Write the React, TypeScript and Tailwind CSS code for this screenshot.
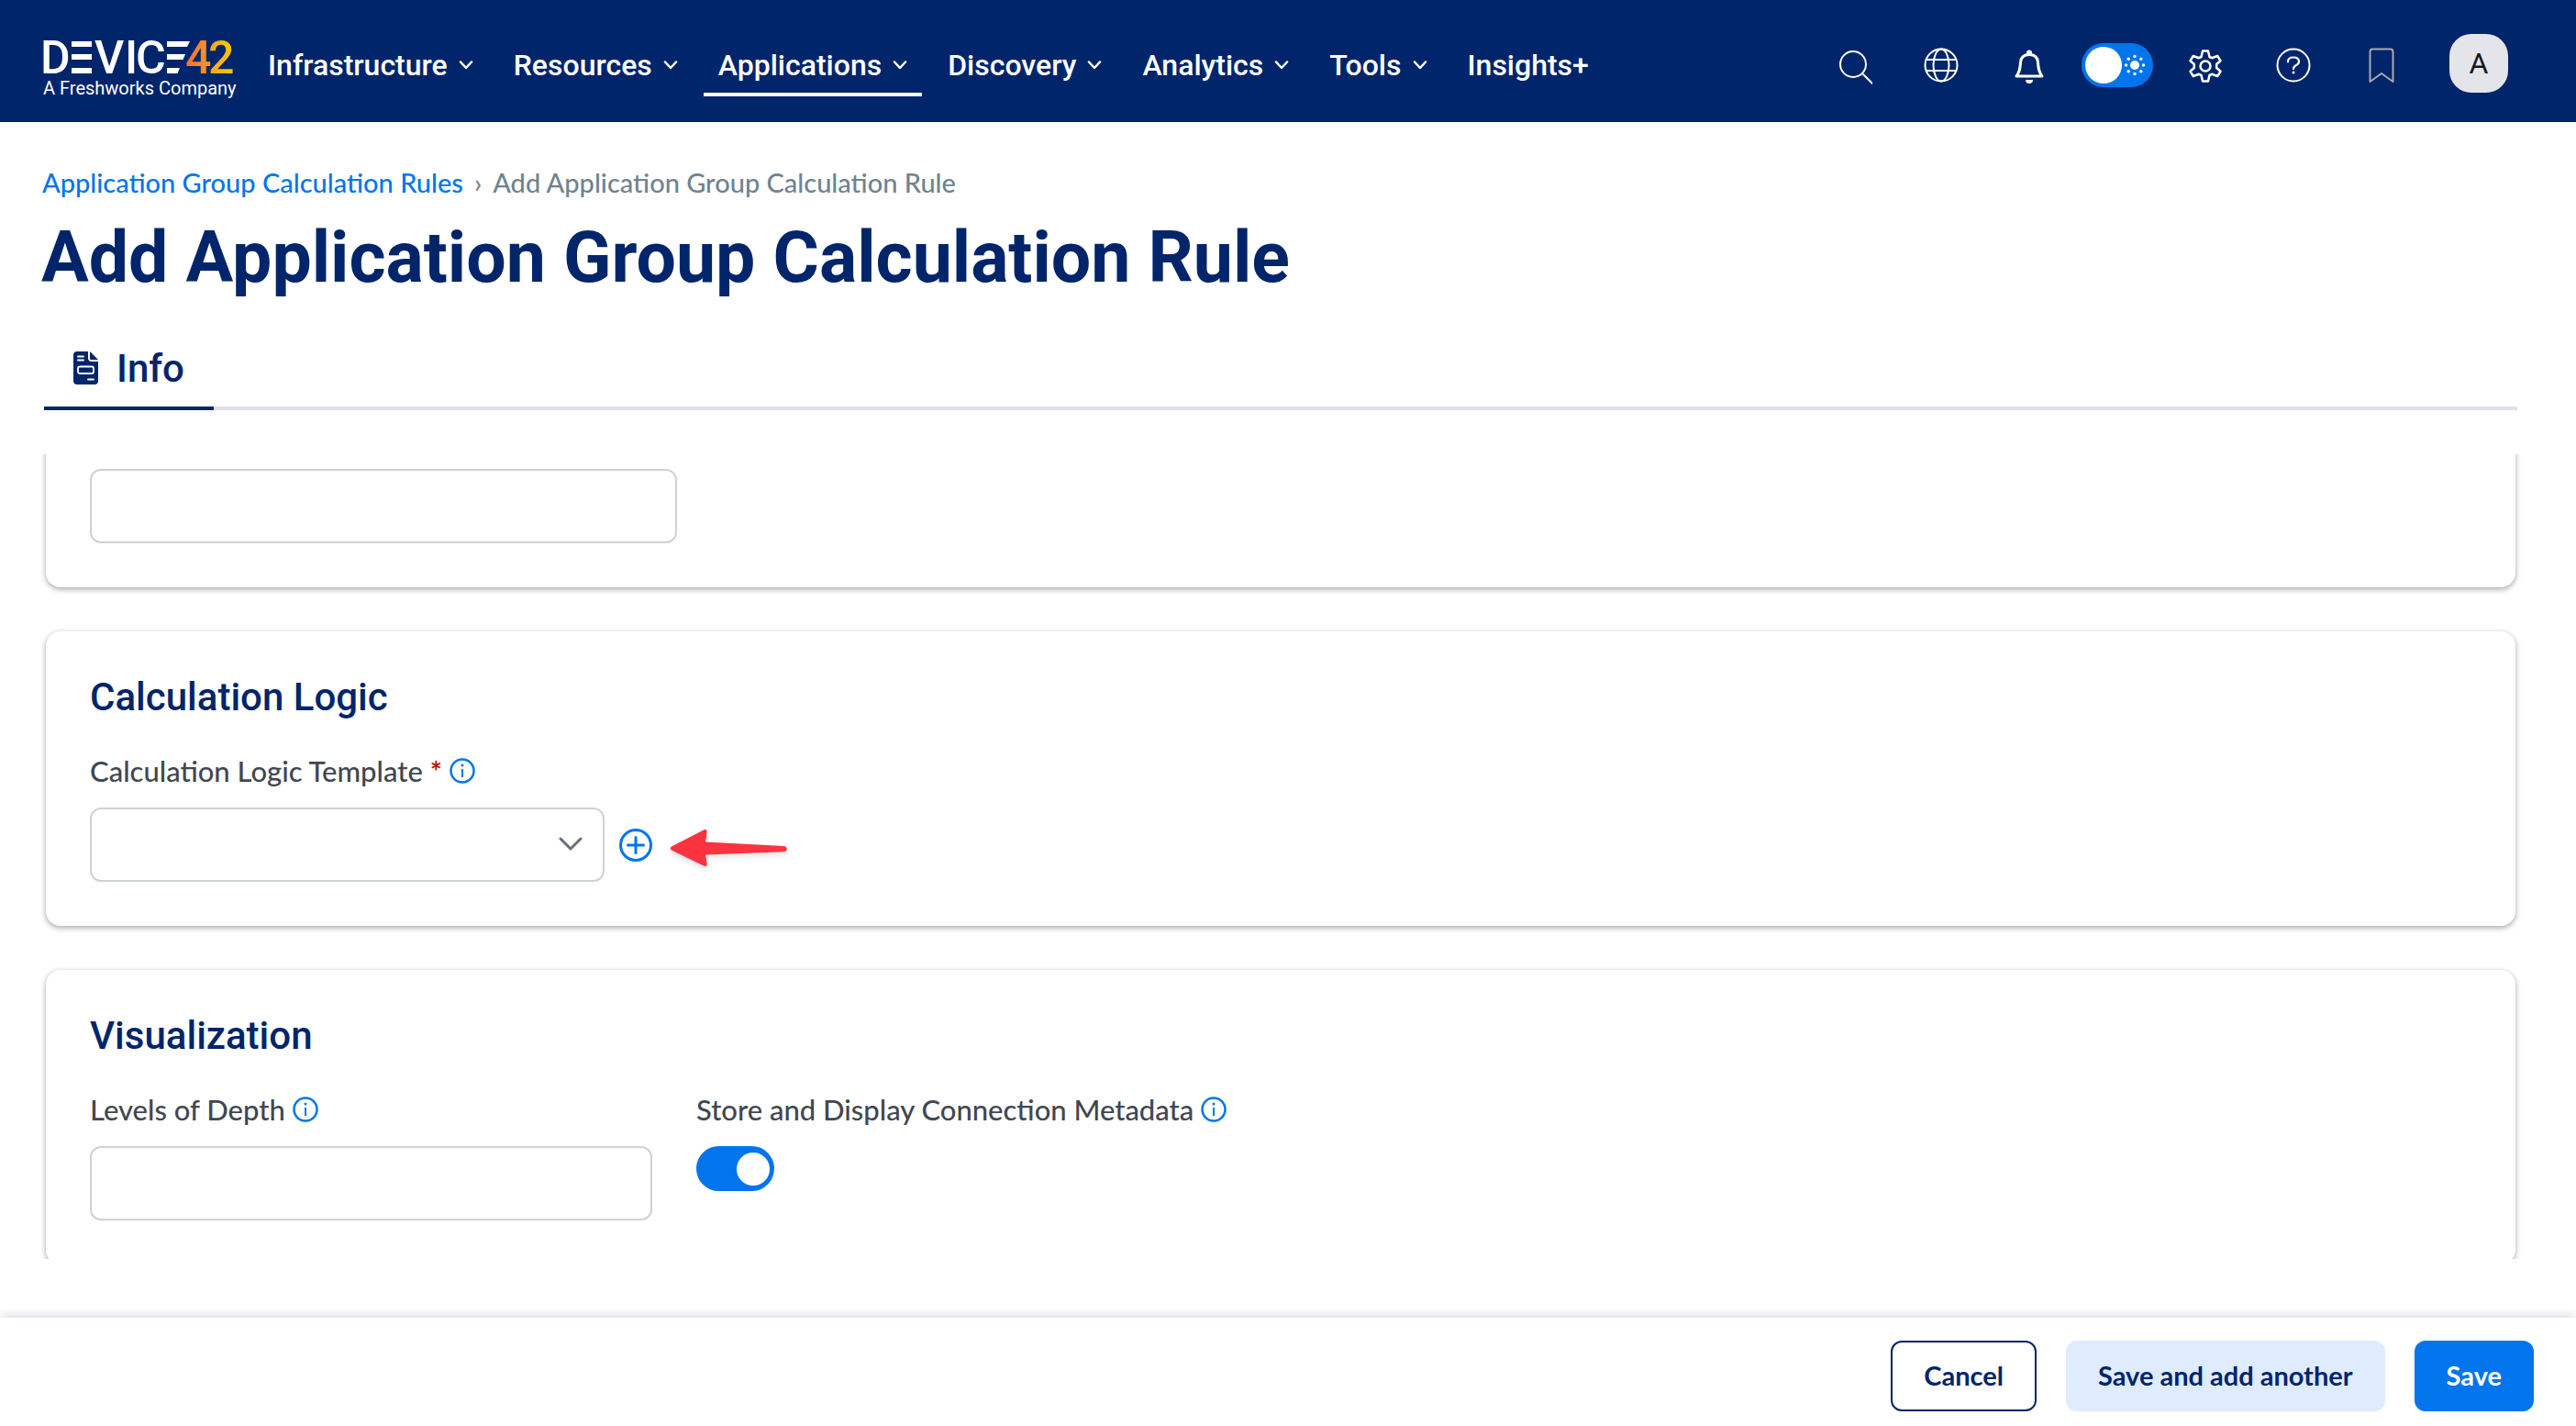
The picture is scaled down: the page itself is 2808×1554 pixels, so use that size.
import type { ReactNode } from "react";

const menus = [
  { label: "Infrastructure", menu: true },
  { label: "Resources", menu: true },
  { label: "Applications", menu: true, active: true },
  { label: "Discovery", menu: true },
  { label: "Analytics", menu: true },
  { label: "Tools", menu: true },
  { label: "Insights+", menu: false },
];

function Logo() {
  return (
    <a href="#" aria-label="Device42 home" className="shrink-0">
      <svg width="216" height="84" viewBox="-4 -8 216 84" fontFamily="Roboto, sans-serif">
        <defs>
          <linearGradient id="four" x1="0" y1="0" x2="1" y2="0">
            <stop offset="0" stopColor="#f36f32" />
            <stop offset="1" stopColor="#f99a22" />
          </linearGradient>
          <linearGradient id="two" x1="0" y1="0" x2="1" y2="0">
            <stop offset="0" stopColor="#f9a51f" />
            <stop offset="1" stopColor="#ffc60a" />
          </linearGradient>
        </defs>
        <g fill="#fff">
          <g fontSize="50" fontWeight="500">
            <text x="-2" y="43">D</text>
            <text x="57" y="43">V</text>
            <text x="90" y="43">I</text>
            <text x="102" y="43">C</text>
          </g>
          <path d="M32 8h22v6H32zM32 22h22v6H32zM32 37h22v6H32z" />
          <path d="M136 8h25l-3 6h-22zM136 22h20l-2.500 6h-17.500zM136 37h14l-2.500 6h-11.500z" />
        </g>
        <g fontSize="50" fontWeight="500">
          <text x="156" y="43" fill="url(#four)">4</text>
          <text x="181" y="43" fill="url(#two)">2</text>
        </g>
        <text x="1" y="66" fill="#fff" fontSize="20">A Freshworks Company</text>
      </svg>
    </a>
  );
}

function NavChevron() {
  return (
    <svg width="16" height="10" viewBox="0 0 16 10" fill="none" stroke="#fff" strokeWidth="2.500" strokeLinecap="round" strokeLinejoin="round">
      <path d="M2 1.500 8 8l6-6.500" />
    </svg>
  );
}

function IconCell({ label, children }: { label: string; children: ReactNode }) {
  return (
    <button type="button" aria-label={label} className="flex w-24 shrink-0 items-center justify-center">
      <svg width="42" height="42" viewBox="-1 -1 42 42" fill="none" stroke="#fff" strokeWidth="2" strokeLinecap="round" strokeLinejoin="round">
        {children}
      </svg>
    </button>
  );
}

function InfoIcon() {
  return (
    <svg width="28" height="28" viewBox="0 0 28 28" fill="none" stroke="#0275ed" strokeWidth="2.500" className="shrink-0">
      <circle cx="14" cy="14" r="12.500" />
      <path d="M14 12v9" strokeWidth="2" />
      <circle cx="14" cy="8" r="1.500" fill="#0275ed" stroke="none" />
    </svg>
  );
}

function Card({ title, children }: { title: string; children: ReactNode }) {
  return (
    <section className="shrink-0 rounded-2xl bg-white p-12 shadow-[0_2px_6px_rgba(0,0,0,0.36)]">
      <h2 className="mb-9 font-[Roboto,sans-serif] text-[42px] leading-[48px] font-medium text-[#00256b]">{title}</h2>
      {children}
    </section>
  );
}

const labelRow = "mb-5 flex h-10 items-center gap-2 text-[31px] leading-10 font-medium text-[#42474f]";
const field = "block h-[81px] w-full rounded-xl border-2 border-[#cdd2da] bg-white px-5 text-[31px] outline-none";

export default function App() {
  return (
    <div className="flex h-screen min-h-[900px] flex-col overflow-hidden bg-white font-[Lato,sans-serif]">
      <header className="flex h-[133px] shrink-0 items-center bg-[#00256b] pr-[74px] pl-[42px]">
        <div className="pt-2">
          <Logo />
        </div>
        <nav className="ml-[18px] flex gap-3 font-[Roboto,sans-serif] text-[32px] leading-[40px] font-medium text-white">
          {menus.map((m) => (
            <button
              key={m.label}
              type="button"
              className={
                m.active
                  ? "flex items-center gap-3 border-b-4 border-white px-4 pt-[22px] pb-[10px]"
                  : "flex items-center gap-3 border-b-4 border-transparent px-4 pt-[22px] pb-[10px]"
              }
            >
              {m.label}
              {m.menu && <NavChevron />}
            </button>
          ))}
        </nav>
        <div className="ml-auto flex items-center pt-1">
          <div className="flex items-center pt-1">
            <IconCell label="Search">
              <circle cx="20" cy="19" r="14" />
              <path d="M30 29l11 11" />
            </IconCell>
            <IconCell label="Language">
              <circle cx="20" cy="20" r="17.500" />
              <ellipse cx="20" cy="20" rx="8.500" ry="17.500" />
              <path d="M4 14h32M4 26h32" />
            </IconCell>
            <IconCell label="Notifications">
              <path d="M6 32c4-5 4-9 4.500-15C11 11 14 8.500 20 8.500s9 2.500 9.500 8.500c.5 6 .5 10 4.500 15z" strokeWidth="3" />
              <path d="M18 8V6.500a2 2 0 0 1 4 0V8" strokeWidth="2" fill="#fff" />
              <path d="M16 36h8a4 4 0 0 1-8 0z" fill="#fff" stroke="none" />
            </IconCell>
            <button type="button" role="switch" aria-checked="false" aria-label="Dark mode" className="flex w-24 items-center justify-center">
              <span className="flex h-12 w-[78px] items-center justify-between rounded-full bg-[#0275ed] pr-2 pl-1">
                <span className="size-10 rounded-full bg-white" />
                <svg width="24" height="24" viewBox="0 0 24 24" fill="#fff">
                  <circle cx="12" cy="12" r="5" />
                  <circle cx="12" cy="2.500" r="1.700" />
                  <circle cx="12" cy="21.500" r="1.700" />
                  <circle cx="2.500" cy="12" r="1.700" />
                  <circle cx="21.500" cy="12" r="1.700" />
                  <circle cx="5.200" cy="5.200" r="1.700" />
                  <circle cx="18.800" cy="5.200" r="1.700" />
                  <circle cx="5.200" cy="18.800" r="1.700" />
                  <circle cx="18.800" cy="18.800" r="1.700" />
                </svg>
              </span>
            </button>
            <IconCell label="Settings">
              <path
                d="M17 4.500h6l1.500 6.500 2.500 1.200 6.200-2.200 3.300 5.200-4.300 3.800v4l4.300 3.800-3.300 5.200-6.200-2.200-2.500 1.200L23 37.500h-6L15.500 31 13 29.800 6.800 32l-3.300-5.200L7.800 23v-4l-4.300-3.800L6.800 10l6.200 2.200 2.500-1.200z"
                strokeWidth="2.500"
              />
              <circle cx="20" cy="21" r="5.500" strokeWidth="2.500" />
            </IconCell>
            <IconCell label="Help">
              <circle cx="20" cy="20" r="17.500" />
              <path d="M14 16.500V16c0-3 2.500-4.500 6-4.500s6 1.500 6 4.700c0 4.300-6 3.300-6 7.800" strokeWidth="2.200" />
              <circle cx="20" cy="28" r="1.500" fill="#fff" stroke="none" />
            </IconCell>
            <IconCell label="Bookmarks">
              <path d="M7.500 38V5.500a3 3 0 0 1 3-3h19a3 3 0 0 1 3 3V38L20 29z" stroke="#a9a9ae" />
            </IconCell>
          </div>
          <button type="button" aria-label="Account" className="ml-[26px] flex size-16 items-center justify-center rounded-3xl bg-[#e4e5ea] font-[Roboto,sans-serif] text-[32px] leading-none text-[#16181c]">
            A
          </button>
        </div>
      </header>

      <main className="flex min-h-0 flex-1 flex-col pt-[46px] pb-16">
        <nav aria-label="Breadcrumb" className="flex h-10 shrink-0 items-center gap-3 pl-[46px] text-[29px] leading-10 font-medium">
          <a href="#" className="text-[#0275ed]">Application Group Calculation Rules</a>
          <span className="text-[#70838f]">›</span>
          <span className="text-[#70838f]">Add Application Group Calculation Rule</span>
        </nav>
        <h1 className="mt-[18px] shrink-0 pl-[45px] font-[Roboto,sans-serif] text-[77px] leading-[88px] font-bold text-[#00256b]">
          Add Application Group Calculation Rule
        </h1>
        <div role="tablist" className="mt-[34px] mr-16 ml-12 flex shrink-0 shadow-[inset_0_-4px_0_#dee0e6]">
          <button
            type="button"
            role="tab"
            aria-selected="true"
            className="flex h-[88px] items-center gap-5 border-b-4 border-[#00256b] px-8 font-[Roboto,sans-serif] text-[42px] font-medium text-[#00256b]"
          >
            <svg width="27" height="36" viewBox="0 0 27 36" fill="#00256b">
              <path d="M4 0h12v7a4 4 0 0 0 4 4h7v21a4 4 0 0 1-4 4H4a4 4 0 0 1-4-4V4a4 4 0 0 1 4-4z" />
              <path d="M18 0l9 9h-8a1 1 0 0 1-1-1z" />
              <path d="M5 5.500h6M5 9.500h6M16 30.500h6" stroke="#fff" strokeWidth="1.800" strokeLinecap="round" />
              <rect x="5" y="16.500" width="17" height="7.500" rx="2" fill="none" stroke="#fff" strokeWidth="1.800" />
            </svg>
            Info
          </button>
        </div>

        <form className="mt-12 flex min-h-0 flex-1 flex-col gap-12 overflow-hidden pr-[66px] pl-[50px]">
          <section className="-mt-4 shrink-0 rounded-b-2xl bg-white px-12 pt-8 pb-12 shadow-[0_2px_6px_rgba(0,0,0,0.36)]">
            <div className="w-[640px]">
              <input type="text" aria-label="Name" className={field} />
            </div>
          </section>

          <Card title="Calculation Logic">
            <label htmlFor="template" className={labelRow}>
              <span>
                Calculation Logic Template <span className="font-bold text-[#c40d0d]">*</span>
              </span>
              <InfoIcon />
            </label>
            <div className="flex items-center">
              <div className="relative w-[561px]">
                <select id="template" className={field + " appearance-none"} />
                <svg width="26" height="16" viewBox="0 0 26 16" fill="none" stroke="#6a7079" strokeWidth="3" strokeLinecap="round" strokeLinejoin="round" className="pointer-events-none absolute top-8 right-6">
                  <path d="M2 2l11 11L24 2" />
                </svg>
              </div>
              <button type="button" aria-label="Add calculation logic template" className="ml-4">
                <svg width="36" height="36" viewBox="0 0 36 36" fill="none" stroke="#0275ed" strokeWidth="3" strokeLinecap="round">
                  <circle cx="18" cy="18" r="16.500" />
                  <path d="M18 9.500v17M9.500 18h17" />
                </svg>
              </button>
              <svg width="136" height="50" viewBox="0 0 136 50" className="mt-2 ml-[18px] drop-shadow-md">
                <path
                  d="M4 22 38 4.500c2-1 4 0 3.700 2L40 17.500l85 4.500c5 .3 5 6 0 6.300L40 31.500l1.700 10c.3 2-1.700 3-3.700 2L4 27c-3-1.500-3-3.500 0-5z"
                  fill="#fb3340"
                />
              </svg>
            </div>
          </Card>

          <Card title="Visualization">
            <div className="flex gap-12">
              <div className="w-[613px]">
                <label htmlFor="depth" className={labelRow}>
                  Levels of Depth <InfoIcon />
                </label>
                <input id="depth" type="text" className={field} />
              </div>
              <div>
                <label htmlFor="metadata" className={labelRow}>
                  Store and Display Connection Metadata <InfoIcon />
                </label>
                <input
                  id="metadata"
                  type="checkbox"
                  role="switch"
                  defaultChecked
                  className="flex h-[49px] w-[85px] appearance-none items-center rounded-full bg-gray-400 px-[5px] before:size-9 before:rounded-full before:bg-white checked:justify-end checked:bg-[#0275ed]"
                />
              </div>
            </div>
          </Card>
        </form>
      </main>

      <footer className="flex h-[118px] shrink-0 items-center justify-end gap-8 bg-white pt-2 pr-[46px] text-[29px] font-bold shadow-[0_-2px_10px_rgba(0,20,90,0.16)]">
        <button type="button" className="h-[77px] rounded-xl border-2 border-[#00256b] px-[34px] text-[#00256b]">Cancel</button>
        <button type="button" className="h-[77px] rounded-xl bg-[#dfebff] px-[35px] text-[#00256b]">Save and add another</button>
        <button type="button" className="h-[77px] rounded-xl bg-[#0275ed] px-[35px] text-white">Save</button>
      </footer>
    </div>
  );
}
